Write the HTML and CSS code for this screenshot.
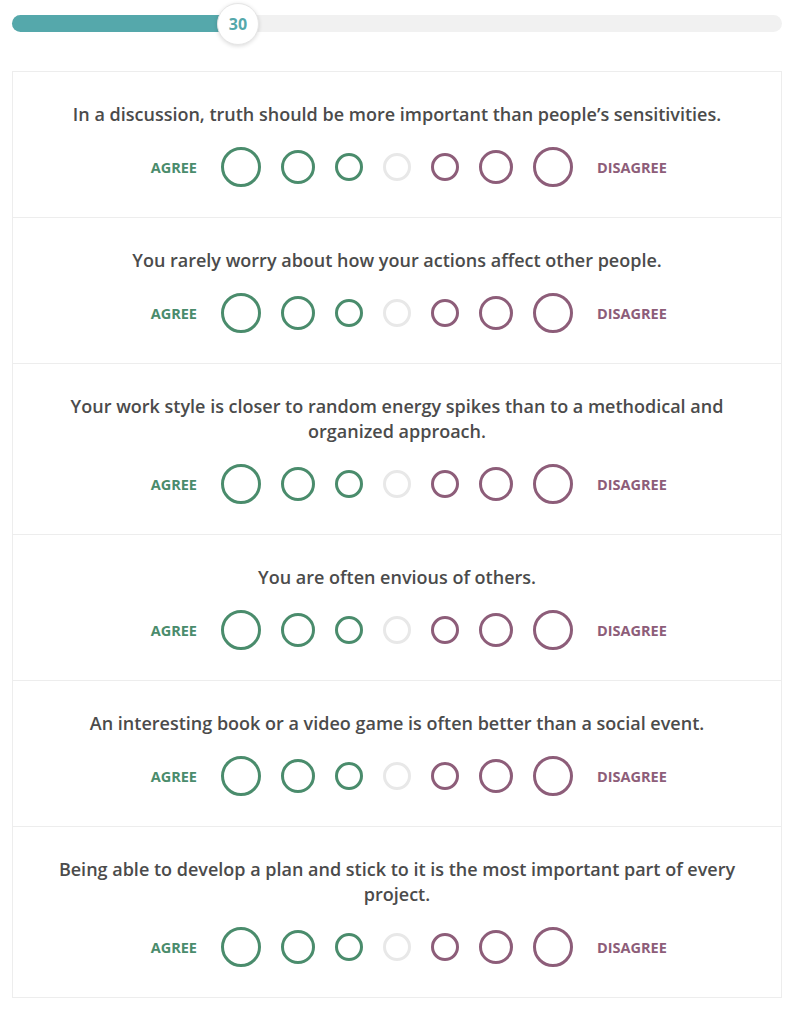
FILE: index.html
```html
<!DOCTYPE html>
<html lang="en">
<head>
<meta charset="utf-8">
<title>Test</title>
<link rel="stylesheet" href="styles.css">
</head>
<body>
<div class="page">
  <div class="progress">
    <div class="progress-fill" style="width: 220px"></div>
    <div class="progress-knob" style="left: 205px">30</div>
  </div>

  <div class="card">
    <div class="question">
      <p class="statement">In a discussion, truth should be more important than people’s sensitivities.</p>
      <div class="scale">
        <span class="label agree">Agree</span>
        <div class="options">
          <span class="opt a3"></span><span class="opt a2"></span><span class="opt a1"></span><span class="opt n"></span><span class="opt d1"></span><span class="opt d2"></span><span class="opt d3"></span>
        </div>
        <span class="label disagree">Disagree</span>
      </div>
    </div>
    <div class="question">
      <p class="statement">You rarely worry about how your actions affect other people.</p>
      <div class="scale">
        <span class="label agree">Agree</span>
        <div class="options">
          <span class="opt a3"></span><span class="opt a2"></span><span class="opt a1"></span><span class="opt n"></span><span class="opt d1"></span><span class="opt d2"></span><span class="opt d3"></span>
        </div>
        <span class="label disagree">Disagree</span>
      </div>
    </div>
    <div class="question">
      <p class="statement">Your work style is closer to random energy spikes than to a methodical and organized approach.</p>
      <div class="scale">
        <span class="label agree">Agree</span>
        <div class="options">
          <span class="opt a3"></span><span class="opt a2"></span><span class="opt a1"></span><span class="opt n"></span><span class="opt d1"></span><span class="opt d2"></span><span class="opt d3"></span>
        </div>
        <span class="label disagree">Disagree</span>
      </div>
    </div>
    <div class="question">
      <p class="statement">You are often envious of others.</p>
      <div class="scale">
        <span class="label agree">Agree</span>
        <div class="options">
          <span class="opt a3"></span><span class="opt a2"></span><span class="opt a1"></span><span class="opt n"></span><span class="opt d1"></span><span class="opt d2"></span><span class="opt d3"></span>
        </div>
        <span class="label disagree">Disagree</span>
      </div>
    </div>
    <div class="question">
      <p class="statement">An interesting book or a video game is often better than a social event.</p>
      <div class="scale">
        <span class="label agree">Agree</span>
        <div class="options">
          <span class="opt a3"></span><span class="opt a2"></span><span class="opt a1"></span><span class="opt n"></span><span class="opt d1"></span><span class="opt d2"></span><span class="opt d3"></span>
        </div>
        <span class="label disagree">Disagree</span>
      </div>
    </div>
    <div class="question">
      <p class="statement">Being able to develop a plan and stick to it is the most important part of every project.</p>
      <div class="scale">
        <span class="label agree">Agree</span>
        <div class="options">
          <span class="opt a3"></span><span class="opt a2"></span><span class="opt a1"></span><span class="opt n"></span><span class="opt d1"></span><span class="opt d2"></span><span class="opt d3"></span>
        </div>
        <span class="label disagree">Disagree</span>
      </div>
    </div>
  </div>
</div>
</body>
</html>
```

FILE: styles.css
```css
* { box-sizing: border-box; }

html, body {
  margin: 0;
  padding: 0;
  background: #ffffff;
}

body {
  font-family: "Open Sans", "Liberation Sans", sans-serif;
  color: #4b4b4b;
}

.page {
  width: 782px;
  padding: 15px 0 0 12px;
}

.progress {
  position: relative;
  height: 17px;
  background: #f1f1f1;
  border-radius: 9px;
}

.progress-fill {
  height: 17px;
  background: #55a8ab;
  border-radius: 9px 0 0 9px;
}

.progress-knob {
  position: absolute;
  top: -12px;
  width: 42px;
  height: 42px;
  border-radius: 50%;
  background: #ffffff;
  border: 1px solid #e6e6e6;
  box-shadow: 0 1px 4px rgba(0, 0, 0, 0.15);
  display: flex;
  align-items: center;
  justify-content: center;
  font-size: 16px;
  font-weight: 700;
  color: #55a8ab;
}

.card {
  margin-top: 39px;
  border: 1px solid #ededed;
  width: 770px;
}

.question {
  padding: 30px 40px 30px;
  border-top: 1px solid #ededed;
  display: flex;
  flex-direction: column;
  align-items: center;
  gap: 20px;
}

.question:first-child { border-top: none; }

.statement {
  margin: 0;
  font-size: 18px;
  line-height: 25px;
  font-weight: 600;
  text-align: center;
  color: #4b4b4b;
}

.scale {
  display: flex;
  align-items: center;
  gap: 24px;
  height: 40px;
}

.label {
  font-size: 14.5px;
  font-weight: 700;
  text-transform: uppercase;
  width: 80px;
}

.label.agree { color: #4a8c6c; text-align: right; }
.label.disagree { color: #8d5d79; text-align: left; }

.options {
  display: flex;
  align-items: center;
  gap: 20px;
}

.opt {
  display: block;
  border-radius: 50%;
  border: 3px solid #4a8c6c;
  width: 28px;
  height: 28px;
}

.opt.a3, .opt.d3 { width: 40px; height: 40px; }
.opt.a2, .opt.d2 { width: 34px; height: 34px; }
.opt.n { border-color: #e8e8e8; }
.opt.d1, .opt.d2, .opt.d3 { border-color: #8d5d79; }
```
